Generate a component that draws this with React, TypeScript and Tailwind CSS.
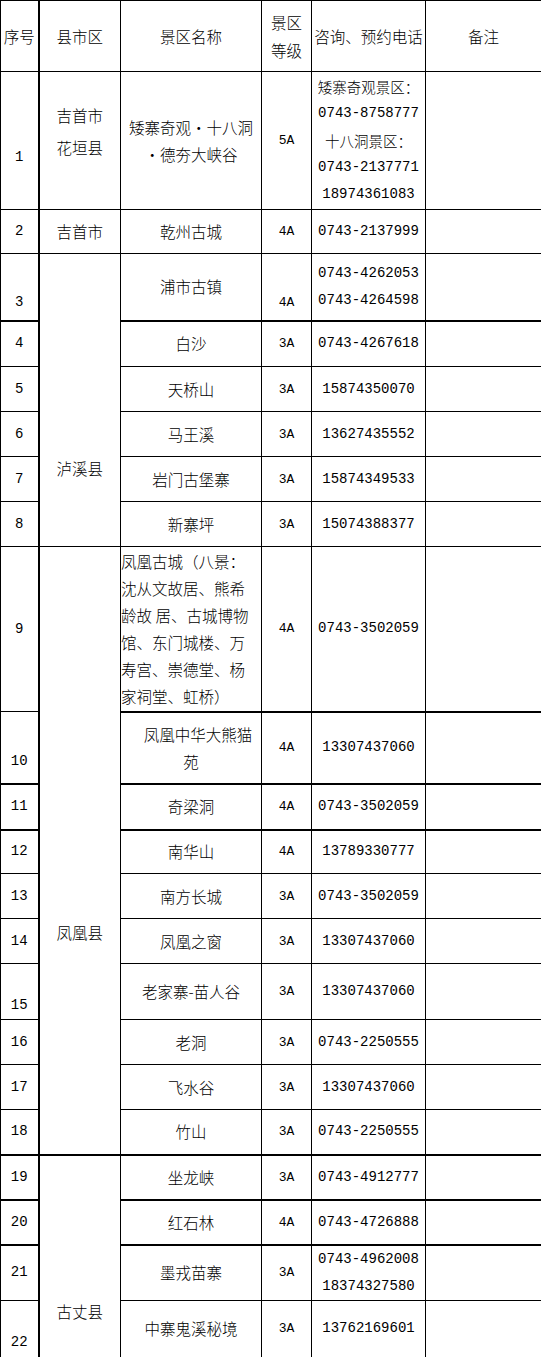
import type { ReactNode } from "react";

// one line of digits, kept as its own block so the line box stays 27px
const N = ({ children }: { children: ReactNode }) => (
  <div className="[font-family:'Liberation_Mono',monospace] text-[14px] leading-[27px]">{children}</div>
);

const G = ({ children }: { children: ReactNode }) => (
  <div className="[font-family:'Liberation_Mono',monospace] text-[13px] leading-[27px]">{children}</div>
);

const C = ({ children }: { children: ReactNode }) => <div className="text-[14.5px] leading-[27px]">{children}</div>;

type County = { span: number; node: ReactNode; cls?: string };

type Row = {
  h: number;
  n: string;
  nc?: string;
  county?: County;
  name: ReactNode;
  nameCls?: string;
  g: string;
  gc?: string;
  phone: ReactNode;
  thick?: boolean;
};

const rows: Row[] = [
  {
    h: 138,
    n: "1",
    nc: "align-top pt-[72px]",
    county: { span: 1, node: <>吉首市<br />花垣县</>, cls: "align-top pt-[27px] leading-[32px]" },
    name: <>矮寨奇观・十八洞<br />・德夯大峡谷</>,
    g: "5A",
    phone: (
      <>
        <C>矮寨奇观景区：</C>
        <N>0743-8758777</N>
        <C>十八洞景区：</C>
        <N>0743-2137771</N>
        <N>18974361083</N>
      </>
    ),
  },
  { h: 44, n: "2", county: { span: 1, node: "吉首市" }, name: "乾州古城", g: "4A", phone: <N>0743-2137999</N> },
  {
    h: 67,
    n: "3",
    nc: "align-bottom pb-[4px]",
    county: { span: 6, node: "泸溪县", cls: "align-top pt-[201px]" },
    name: "浦市古镇",
    g: "4A",
    gc: "align-bottom pb-[4px]",
    phone: (
      <>
        <N>0743-4262053</N>
        <N>0743-4264598</N>
      </>
    ),
    thick: true,
  },
  { h: 46, n: "4", name: "白沙", g: "3A", phone: <N>0743-4267618</N> },
  { h: 45, n: "5", name: "天桥山", g: "3A", phone: <N>15874350070</N> },
  { h: 45, n: "6", name: "马王溪", g: "3A", phone: <N>13627435552</N> },
  { h: 45, n: "7", name: "岩门古堡寨", g: "3A", phone: <N>15874349533</N> },
  { h: 45, n: "8", name: "新寨坪", g: "3A", phone: <N>15074388377</N> },
  {
    h: 165,
    n: "9",
    county: { span: 10, node: "凤凰县", cls: "align-top pt-[372px] border-b-2" },
    name: (
      <>
        凤凰古城（八景：<br />
        沈从文故居、熊希<br />
        龄故 居、古城博物<br />
        馆、东门城楼、万<br />
        寿宫、崇德堂、杨<br />
        家祠堂、虹桥）
      </>
    ),
    nameCls: "text-left",
    g: "4A",
    phone: <N>0743-3502059</N>,
    thick: true,
  },
  {
    h: 72,
    n: "10",
    nc: "align-bottom pb-[8px]",
    name: (
      <>
        <span className="pl-[14px]">凤凰中华大熊猫</span>
        <br />苑
      </>
    ),
    g: "4A",
    phone: <N>13307437060</N>,
    thick: true,
  },
  { h: 46, n: "11", name: "奇梁洞", g: "4A", phone: <N>0743-3502059</N>, thick: true },
  { h: 44, n: "12", name: "南华山", g: "4A", phone: <N>13789330777</N> },
  { h: 45, n: "13", name: "南方长城", g: "3A", phone: <N>0743-3502059</N> },
  { h: 45, n: "14", name: "凤凰之窗", g: "3A", phone: <N>13307437060</N> },
  { h: 56, n: "15", nc: "align-bottom pb-[0px]", name: "老家寨-苗人谷", g: "3A", phone: <N>13307437060</N> },
  { h: 45, n: "16", name: "老洞", g: "3A", phone: <N>0743-2250555</N> },
  { h: 45, n: "17", name: "飞水谷", g: "3A", phone: <N>13307437060</N> },
  { h: 45, n: "18", name: "竹山", g: "3A", phone: <N>0743-2250555</N>, thick: true },
  {
    h: 45,
    n: "19",
    county: { span: 4, node: "古丈县", cls: "align-top pt-[142px]" },
    name: "坐龙峡",
    g: "3A",
    phone: <N>0743-4912777</N>,
    thick: true,
  },
  { h: 45, n: "20", name: "红石林", g: "4A", phone: <N>0743-4726888</N>, thick: true },
  {
    h: 55,
    n: "21",
    name: "墨戎苗寨",
    g: "3A",
    phone: (
      <>
        <N>0743-4962008</N>
        <N>18374327580</N>
      </>
    ),
  },
  { h: 57, n: "22", nc: "align-bottom pb-[1px]", name: "中寨鬼溪秘境", g: "3A", phone: <N>13762169601</N> },
];

const td = "border border-black p-0";
const mid = "align-middle";

export default function App() {
  return (
    <div className="bg-white w-[541px] min-h-[1357px]">
      <table className="table-fixed border-collapse w-[541px] text-black text-[15.5px] font-light leading-[27px] [font-family:'Noto_Sans_CJK_SC',sans-serif]">
        <colgroup>
          <col className="w-[38px]" />
          <col className="w-[82px]" />
          <col className="w-[141px]" />
          <col className="w-[50px]" />
          <col className="w-[114px]" />
          <col className="w-[116px]" />
        </colgroup>
        <thead>
          <tr className="h-[71px]">
            <th className={`${td} ${mid} text-center font-light border-r-2 whitespace-nowrap`}>序号</th>
            <th className={`${td} ${mid} text-center font-light`}>县市区</th>
            <th className={`${td} ${mid} text-center font-light`}>景区名称</th>
            <th className={`${td} ${mid} text-center font-light leading-[28px]`}>
              景区<br />等级
            </th>
            <th className={`${td} ${mid} text-center font-light whitespace-nowrap`}>咨询、预约电话</th>
            <th className={`${td} ${mid} text-center font-light`}>备注</th>
          </tr>
        </thead>
        <tbody>
          {rows.map((r) => {
            const b = r.thick ? "border-b-2" : "";
            return (
              <tr key={r.n} style={{ height: r.h }}>
                <td className={`${td} text-center border-r-2 ${r.n === "9" ? "" : b} ${r.nc ?? mid}`}>
                  <N>{r.n}</N>
                </td>
                {r.county && (
                  <td
                    rowSpan={r.county.span}
                    className={`${td} text-center ${r.county.span === 1 ? b : ""} ${r.county.cls ?? mid}`}
                  >
                    {r.county.node}
                  </td>
                )}
                <td className={`${td} ${mid} whitespace-nowrap ${b} ${r.nameCls ?? "text-center"}`}>{r.name}</td>
                <td className={`${td} text-center ${b} ${r.gc ?? mid}`}>
                  <G>{r.g}</G>
                </td>
                <td className={`${td} ${mid} text-center whitespace-nowrap ${b}`}>{r.phone}</td>
                <td className={`${td} ${b}`}></td>
              </tr>
            );
          })}
        </tbody>
      </table>
    </div>
  );
}
